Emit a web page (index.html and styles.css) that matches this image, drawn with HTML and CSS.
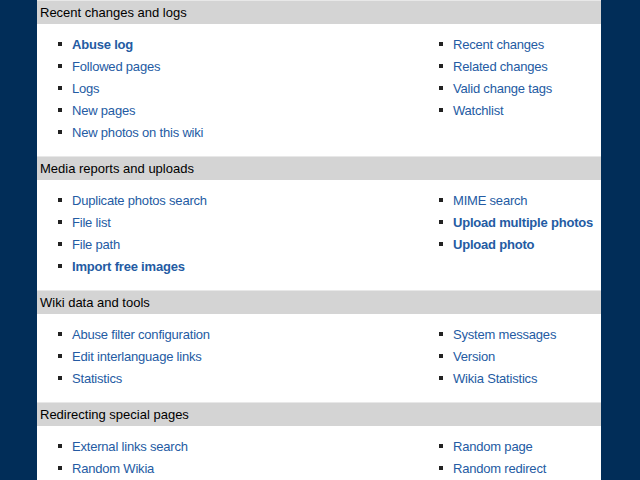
FILE: index.html
```html
<!DOCTYPE html>
<html lang="en">

<head>
    <meta charset="UTF-8">
    <title>Special pages</title>
    <link rel="stylesheet" href="styles.css">
</head>

<body>
    <div class="page">
        <!-- Recent changes -->
        <div class="section">
            <h2 class="section-title">Recent changes and logs</h2>
            <div class="columns">
                <ul class="links">
                    <li><a href="#" class="strong">Abuse log</a></li>
                    <li><a href="#">Followed pages</a></li>
                    <li><a href="#">Logs</a></li>
                    <li><a href="#">New pages</a></li>
                    <li><a href="#">New photos on this wiki</a></li>
                </ul>
                <ul class="links">
                    <li><a href="#">Recent changes</a></li>
                    <li><a href="#">Related changes</a></li>
                    <li><a href="#">Valid change tags</a></li>
                    <li><a href="#">Watchlist</a></li>
                </ul>
            </div>
        </div>

        <!-- Media -->
        <div class="section">
            <h2 class="section-title">Media reports and uploads</h2>
            <div class="columns">
                <ul class="links">
                    <li><a href="#">Duplicate photos search</a></li>
                    <li><a href="#">File list</a></li>
                    <li><a href="#">File path</a></li>
                    <li><a href="#" class="strong">Import free images</a></li>
                </ul>
                <ul class="links">
                    <li><a href="#">MIME search</a></li>
                    <li><a href="#" class="strong">Upload multiple photos</a></li>
                    <li><a href="#" class="strong">Upload photo</a></li>
                </ul>
            </div>
        </div>

        <!-- Wiki data -->
        <div class="section">
            <h2 class="section-title">Wiki data and tools</h2>
            <div class="columns">
                <ul class="links">
                    <li><a href="#">Abuse filter configuration</a></li>
                    <li><a href="#">Edit interlanguage links</a></li>
                    <li><a href="#">Statistics</a></li>
                </ul>
                <ul class="links">
                    <li><a href="#">System messages</a></li>
                    <li><a href="#">Version</a></li>
                    <li><a href="#">Wikia Statistics</a></li>
                </ul>
            </div>
        </div>

        <!-- Redirecting -->
        <div class="section">
            <h2 class="section-title">Redirecting special pages</h2>
            <div class="columns">
                <ul class="links">
                    <li><a href="#">External links search</a></li>
                    <li><a href="#">Random Wikia</a></li>
                </ul>
                <ul class="links">
                    <li><a href="#">Random page</a></li>
                    <li><a href="#">Random redirect</a></li>
                </ul>
            </div>
        </div>
    </div>
</body>

</html>
```

FILE: styles.css
```css
body {
    margin: 0;
    background-color: #012d58;
    font-family: "Liberation Sans", Arial, sans-serif;
    font-size: 13px;
}

.page {
    width: 564px;
    margin-left: 37px;
    background-color: #fff;
    min-height: 480px;
}

.section-title {
    margin: 0;
    height: 23px;
    line-height: 23px;
    padding-left: 3px;
    font-size: 13px;
    font-weight: normal;
    color: #000;
    background-color: #d4d4d4;
    border-top: 1px solid #e8e8e8;
}

.columns {
    display: flex;
    padding: 9px 0 13px 21px;
}

.links {
    list-style: none;
    margin: 0;
    padding: 0;
    flex: 0 0 381px;
}

.links + .links {
    flex: 1;
}

.links li {
    display: flex;
    align-items: center;
    height: 22px;
}

.links li::before {
    content: "";
    width: 4px;
    height: 4px;
    margin-right: 10px;
    background-color: #222;
}

.links a {
    color: #245ba3;
    text-decoration: none;
    white-space: nowrap;
    letter-spacing: -0.2px;
}

.links a.strong {
    font-weight: bold;
}
```
